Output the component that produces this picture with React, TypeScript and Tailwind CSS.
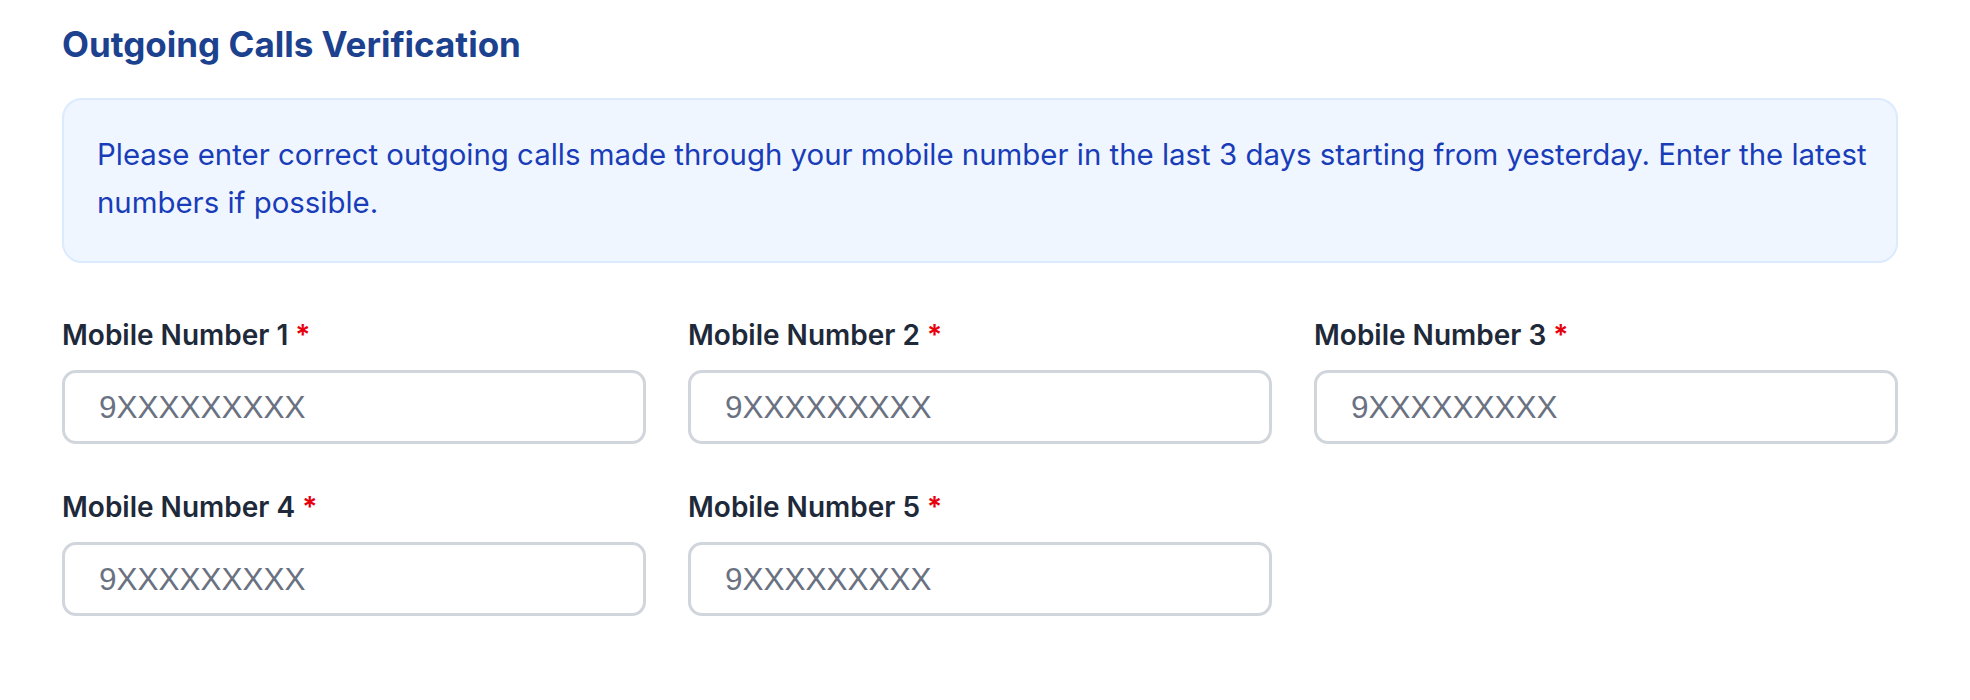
import React from 'react';

const fields = [1, 2, 3, 4, 5];

const App: React.FC = () => {
  return (
    <div className="bg-white min-h-[700px] pl-[62px] pr-[72px] pt-[23px]" style={{ fontFamily: 'Inter, "Noto Sans", sans-serif' }}>
      {/* Heading */}
      <h2 className="text-[35px] leading-[42px] font-bold text-[#1b418f] mb-[33px]">Outgoing Calls Verification</h2>

      {/* Notice */}
      <div className="bg-blue-50 border-2 border-blue-100 rounded-[20px] px-[33px] pt-[31px] pb-[34px]">
        <p className="text-[29.4px] leading-[48px] text-blue-800 whitespace-nowrap">
          Please enter correct outgoing calls made through your mobile number in the last 3 days starting from yesterday. Enter the latest
          <br />
          numbers if possible.
        </p>
      </div>

      {/* Mobile number fields */}
      <div className="grid grid-cols-3 gap-x-[42px] gap-y-[44px] mt-[53px]">
        {fields.map(n => (
          <div key={n}>
            <label className="block text-[28px] leading-[38px] font-semibold text-gray-800 mb-[16px]">
              Mobile Number {n} <span className="text-red-600">*</span>
            </label>
            <input
              type="text"
              placeholder="9XXXXXXXXX"
              className="w-full h-[74px] border-[3px] border-gray-300 rounded-[14px] pl-[34px] text-[31.5px] text-gray-800 placeholder:text-gray-500 bg-white outline-none"
              style={{ fontFamily: '"Liberation Sans", Arial, sans-serif' }}
            />
          </div>
        ))}
      </div>
    </div>
  );
};

export default App;
